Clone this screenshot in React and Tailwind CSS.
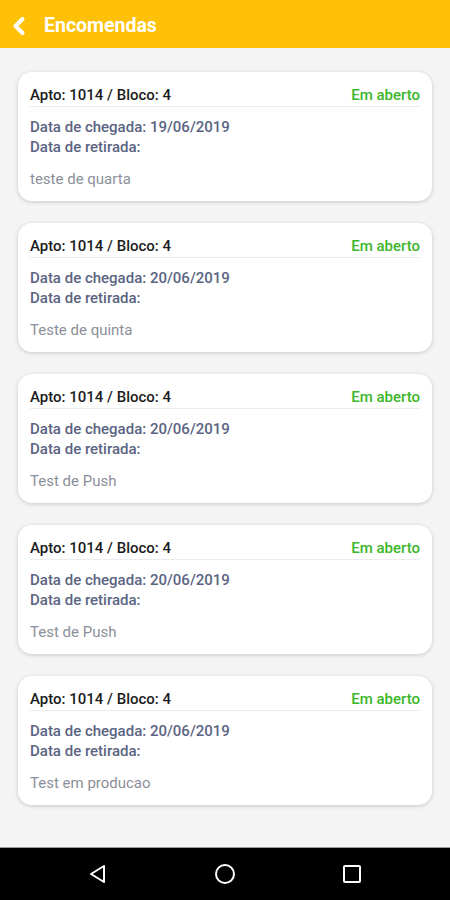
import { ChevronLeft } from "lucide-react";

const encomendas = [
  { chegada: "19/06/2019", obs: "teste de quarta" },
  { chegada: "20/06/2019", obs: "Teste de quinta" },
  { chegada: "20/06/2019", obs: "Test de Push" },
  { chegada: "20/06/2019", obs: "Test de Push" },
  { chegada: "20/06/2019", obs: "Test em producao" },
];

const EncomendaCard = ({ item }) => {
  return (
    <div className="bg-white rounded-[14px] shadow-[0_1px_4px_rgba(0,0,0,0.18)] px-3 pt-[13px] h-[129px]">
      <div className="flex justify-between items-center border-b border-[#ececec] pb-[1px] leading-[20px]">
        <p className="text-[15px] font-medium text-[#1c1c1c]">Apto: 1014 / Bloco: 4</p>
        <p className="text-[15px] font-medium text-[#3cb62a]">Em aberto</p>
      </div>
      <div className="mt-[10px] text-[15px] font-medium text-[#5b6482] leading-[20px]">
        <p>Data de chegada: {item.chegada}</p>
        <p>Data de retirada:</p>
      </div>
      <p className="mt-[12px] text-[15px] leading-[20px] text-[#8b909a]">{item.obs}</p>
    </div>
  );
};

const App = () => {
  return (
    <div className="w-[450px] h-[900px] flex flex-col bg-[#f4f4f4] font-['Roboto',sans-serif]">
      <header className="h-[48px] bg-[#ffc107] flex items-center pl-[5px] pt-[4px] shrink-0">
        <ChevronLeft size={28} color="#ffffff" strokeWidth={3.5} />
        <h1 className="ml-[11px] text-[19.5px] font-bold text-white">Encomendas</h1>
      </header>
      <main className="flex-1 flex flex-col gap-[22px] px-[18px] pt-[24px]">
        {encomendas.map((item, i) => (
          <EncomendaCard key={i} item={item} />
        ))}
      </main>
      <nav className="h-[53px] bg-black border-t border-[#9a9a9a] flex items-center justify-center gap-[106px] shrink-0">
        <svg width="20" height="20" viewBox="0 0 20 20">
          <path d="M16 2 L3 10 L16 18 Z" fill="none" stroke="#fff" strokeWidth="2" strokeLinejoin="round" />
        </svg>
        <svg width="22" height="22" viewBox="0 0 22 22">
          <circle cx="11" cy="11" r="9" fill="none" stroke="#fff" strokeWidth="2" />
        </svg>
        <svg width="20" height="20" viewBox="0 0 20 20">
          <rect x="2" y="2" width="16" height="16" rx="1" fill="none" stroke="#fff" strokeWidth="2" />
        </svg>
      </nav>
    </div>
  );
};

export default App;
